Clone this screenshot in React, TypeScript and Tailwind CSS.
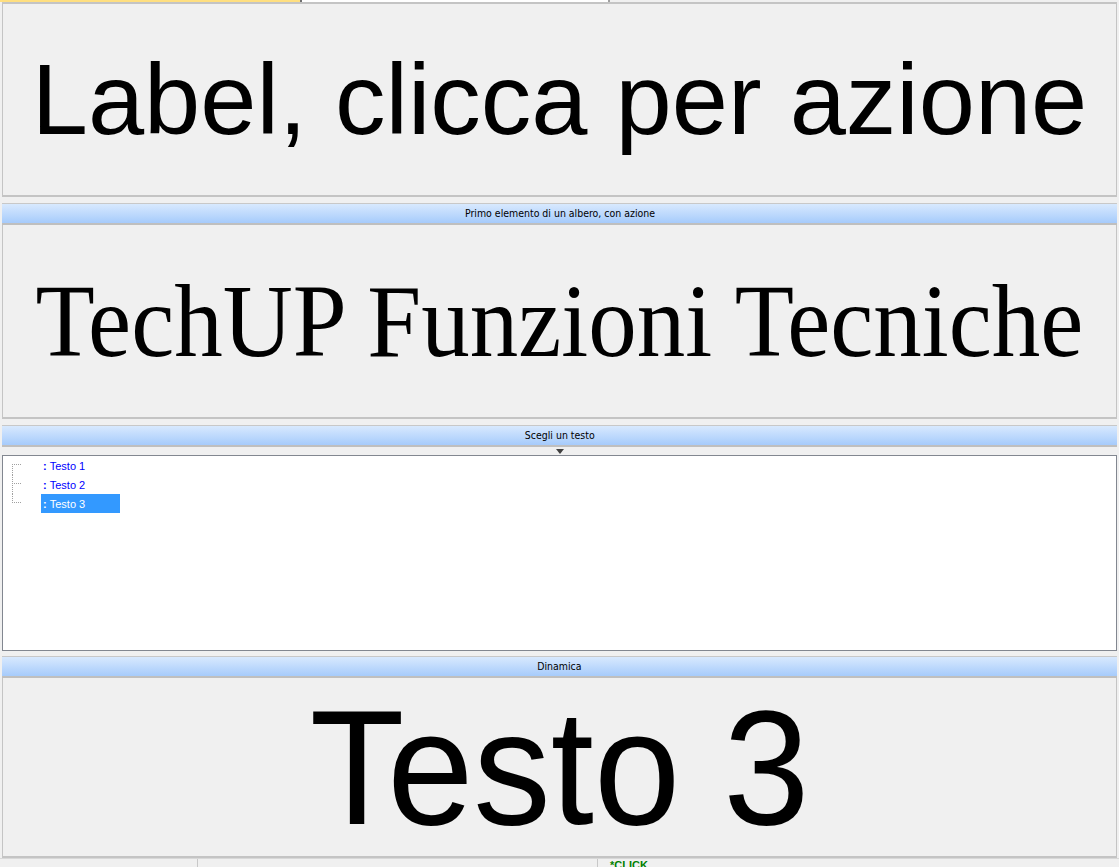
import { FC } from "react";

const Header: FC<{ title: string }> = ({ title }) => (
	<div className="mx-[2px] flex h-[22px] shrink-0 items-center justify-center border-t border-b-2 border-t-[#c8c8c8] border-b-[#bfbfbf] bg-gradient-to-b from-[#d8e9fe] to-[#a6cbfb] text-[11px] leading-none text-black">
		<span className="[font-family:Tahoma,'DejaVu_Sans_Condensed','Liberation_Sans',sans-serif] scale-x-[0.95]">
			{title}
		</span>
	</div>
);

const TreeItem: FC<{ label: string; selected?: boolean; pos: "first" | "mid" | "last" }> = ({
	label,
	selected,
	pos,
}) => (
	<div className="relative flex h-[19px] items-center">
		<div
			className={
				"absolute left-[9px] w-0 border-l border-dotted border-[#a0a0a0] " +
				(pos === "first"
					? "top-[8px] h-[11px]"
					: pos === "mid"
						? "top-0 h-[19px]"
						: "top-0 h-[9px]")
			}
		/>
		<div className="absolute left-[9px] top-[8px] w-[9px] border-t border-dotted border-[#a0a0a0]" />
		<div
			className={
				"ml-[38px] flex h-[19px] w-[79px] items-center pl-[2px] pt-[1px] text-[11px] " +
				(selected ? "bg-[#3399ff] text-white" : "text-[#0000ff]")
			}
		>
			<span className="font-bold">:</span>&nbsp;{label}
		</div>
	</div>
);

export default function App() {
	return (
		<div className="flex h-[867px] w-[1119px] flex-col overflow-hidden bg-[#f0f0f0] [font-family:'Liberation_Sans',Arial,sans-serif]">
			{/* tab strip, mostly cut off */}
			<div className="flex h-[2px] shrink-0">
				<div className="w-[300px] bg-[#ffdf80]" />
				<div className="w-[2px] bg-[#707070]" />
				<div className="w-[306px] bg-white" />
				<div className="w-[2px] bg-[#a0a0a0]" />
				<div className="flex-1" />
			</div>

			<div className="mx-[2px] flex h-[195px] shrink-0 items-center justify-center overflow-hidden border-t-2 border-r border-b-2 border-l border-[#c4c4c4] bg-[#f0f0f0]">
				<span className="whitespace-nowrap text-[101px] leading-none text-black">
					Label, clicca per azione
				</span>
			</div>

			<div className="h-[6px] shrink-0" />
			<Header title="Primo elemento di un albero, con azione" />
			<div className="mx-[2px] flex h-[194px] shrink-0 items-center justify-center overflow-hidden border-r border-b-2 border-l border-[#c4c4c4]">
				<span className="whitespace-nowrap text-[97px] leading-none text-black scale-y-[1.06] [font-family:'Liberation_Serif','Times_New_Roman',serif]">
					TechUP Funzioni Tecniche
				</span>
			</div>

			<div className="h-[6px] shrink-0" />
			<Header title="Scegli un testo" />
			<div className="flex h-[8px] shrink-0 items-center justify-center">
				<div className="h-0 w-0 border-x-[4px] border-t-[5px] border-x-transparent border-t-[#404040]" />
			</div>
			<div className="mx-[2px] h-[196px] shrink-0 border border-[#828790] bg-white">
				<TreeItem label="Testo 1" pos="first" />
				<TreeItem label="Testo 2" pos="mid" />
				<TreeItem label="Testo 3" selected pos="last" />
			</div>

			<div className="h-[5px] shrink-0" />
			<Header title="Dinamica" />
			<div className="mx-[2px] flex h-[180px] shrink-0 items-center justify-center border-r border-b-2 border-l border-[#c4c4c4]">
				<span className="whitespace-nowrap text-[155px] leading-none text-black scale-y-[1.05]">
					Testo 3
				</span>
			</div>

			{/* status bar */}
			<div className="flex flex-1 border-t border-[#d8d8d8] text-[11px]">
				<div className="w-[198px] border-r border-[#c8c8c8]" />
				<div className="w-[400px] border-r border-[#c8c8c8]" />
				<div className="pl-[12px] pt-[1px] font-bold leading-none text-[#008000]">
					*CLICK
				</div>
			</div>
		</div>
	);
}
